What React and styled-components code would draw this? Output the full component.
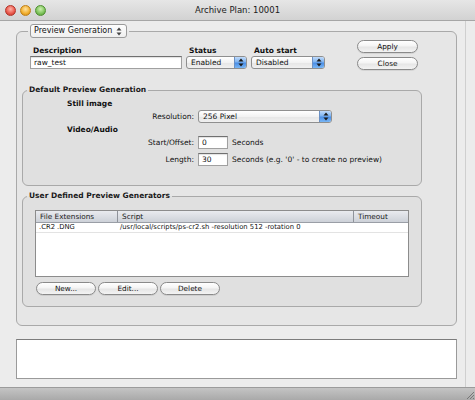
import React from 'react';
import styled, { createGlobalStyle } from 'styled-components';

const Global = createGlobalStyle`
  html, body { margin: 0; padding: 0; background: #ececec; }
  body { font-family: "DejaVu Sans", Verdana, sans-serif; font-size: 7.5px; color: #111; }
  * { box-sizing: border-box; }
`;

const Window = styled.div`
  width: 475px; height: 400px; display: flex; flex-direction: column;
  background: #ececec; overflow: hidden;
`;

const TitleBar = styled.div`
  height: 21px; flex: none; display: grid; grid-template-columns: 1fr auto 1fr; align-items: center;
  background: linear-gradient(#e6e6e6, #d2d2d2); border-bottom: 1px solid #a6a6a6;
`;

const Lights = styled.div`
  display: flex; gap: 4px; padding-left: 5px;
`;

const Light = styled.span`
  width: 11px; height: 11px; border-radius: 50%;
  background: radial-gradient(circle at 50% 35%, ${p => p.$hi} 0%, ${p => p.$c} 60%, ${p => p.$lo} 100%);
  border: 1px solid ${p => p.$lo};
`;

const Title = styled.div`
  font-size: 8.5px; color: #1a1a1a;
`;

const Content = styled.div`
  flex: 1; display: flex; flex-direction: column; padding: 3px 18px 0 16px;
  background: linear-gradient(to right, transparent 465px, #cfcfcf 465px, #cfcfcf 466px, transparent 466px);
`;

const Group = styled.fieldset`
  margin: ${p => p.$m || 0}; min-width: 0;
  border: 1px solid #a9a9a9; border-radius: 6px;
  background: rgba(0, 0, 0, 0.022);
  padding: ${p => p.$pad};
`;

const Legend = styled.legend`
  padding: 0 2px; margin-left: ${p => p.$offset}px;
  font-weight: bold; line-height: 10px; font-size: 7.5px; color: #1a1a1a;
`;

const TopRow = styled.div`
  display: flex; justify-content: space-between; align-items: flex-start; padding: 0 4px 0 8px;
`;

const FieldsGrid = styled.div`
  display: grid; grid-template-columns: 152px 61px 74px; grid-template-rows: 11px 13px;
  column-gap: 4px; margin-top: 5px;
`;

const Label = styled.div`
  font-weight: bold; padding-left: 3px; line-height: 11px; color: #111;
`;

const ButtonCol = styled.div`
  display: flex; flex-direction: column; gap: 4px; width: 61px;
`;

const PushButton = styled.div`
  height: 13px; width: ${p => p.$w || 61}px; border-radius: 7px; border: 1px solid #8a8a8a;
  background: linear-gradient(#ffffff, #f4f4f4 45%, #e6e6e6 55%, #f3f3f3);
  display: flex; align-items: center; justify-content: center; font-size: 7.3px; color: #111;
  box-shadow: 0 1px 0 rgba(0,0,0,0.08);
`;

const TextField = styled.div`
  height: 13px; width: ${p => (p.$w ? p.$w + 'px' : 'auto')}; background: #fff;
  border: 1px solid #a0a0a0; border-top-color: #707070;
  padding-left: 3px; line-height: 11px; font-size: 7.5px;
  box-shadow: inset 0 1px 1px rgba(0,0,0,0.12);
`;

const PopupBox = styled.div`
  height: 13px; width: ${p => p.$w}px; display: flex; align-items: stretch;
  border: 1px solid #8f8f8f; border-radius: 3px; overflow: hidden;
  background: linear-gradient(#ffffff, #f2f2f2 50%, #e5e5e5 51%, #f0f0f0);
`;

const PopupText = styled.div`
  flex: 1; padding-left: 4px; line-height: 11px; font-size: 7.5px; white-space: nowrap;
`;

const PopupCap = styled.div`
  width: 12px; flex: none; display: flex; align-items: center; justify-content: center;
  background: linear-gradient(#c0dbfb, #7fb3ef 45%, #4a8ee6 55%, #7ab7f5);
  border-left: 1px solid #6a90c4;
`;

const LegendPopup = styled.div`
  height: 14px; width: 97px; display: flex; align-items: center; justify-content: space-between;
  border: 1px solid #9a9a9a; border-radius: 3px; padding: 0 4px 0 3px;
  background: linear-gradient(#fdfdfd, #efefef);
  font-size: 8px; font-weight: normal; color: #111; line-height: 12px;
`;

const Heading = styled.div`
  font-weight: bold; line-height: 10px; margin-top: ${p => p.$mt || 0}px;
`;

const FormRow = styled.div`
  display: grid; grid-template-columns: 127px auto; column-gap: 4px; align-items: center;
  height: 13px; margin-top: ${p => p.$mt || 0}px;
`;

const RowLabel = styled.div`
  text-align: right; font-size: 7.5px;
`;

const Inline = styled.div`
  display: flex; align-items: center; gap: 4px; white-space: nowrap;
`;

const Table = styled.div`
  height: 67px; background: #fff; border: 1px solid #8c8c8c;
  display: flex; flex-direction: column;
`;

const TableHeader = styled.div`
  display: grid; grid-template-columns: 81px 236px 1fr; height: 12px; flex: none;
  background: linear-gradient(#e9ebef, #cdd1d8); border-bottom: 1px solid #9a9ea6;
`;

const HeadCell = styled.div`
  padding-left: 4px; line-height: 11px; font-size: 7.3px; color: #1a1a1a;
  border-left: ${p => (p.$first ? 'none' : '1px solid #8f939a')};
`;

const TableRow = styled.div`
  display: grid; grid-template-columns: 81px 236px 1fr; height: 10px;
  border-bottom: 1px solid #e3e3e3;
`;

const Cell = styled.div`
  padding-left: 3px; line-height: 9px; font-size: 6.8px; white-space: nowrap; overflow: hidden;
`;

const ButtonRow = styled.div`
  display: flex; gap: 2px; margin-top: 5px; padding-left: 1px;
`;

const LogBox = styled.div`
  height: 40px; margin-top: 13px; background: #fff;
  border: 1px solid #9a9a9a; border-top-color: #7c7c7c;
`;

const BottomBar = styled.div`
  margin-top: auto; height: 13px; flex: none; display: flex; justify-content: flex-end; align-items: flex-end;
  background: linear-gradient(#c4c4c4, #a9a9a9); border-top: 1px solid #9b9b9b;
  margin-left: -16px; margin-right: -18px;
`;

const Arrows = ({ color = '#1a1a1a' }) => (
  <svg width="6" height="9" viewBox="0 0 6 9">
    <path d="M3 0.5 L5.5 3.5 L0.5 3.5 Z" fill={color} />
    <path d="M3 8.5 L5.5 5.5 L0.5 5.5 Z" fill={color} />
  </svg>
);

const Popup = ({ w, children }) => (
  <PopupBox $w={w}>
    <PopupText>{children}</PopupText>
    <PopupCap><Arrows /></PopupCap>
  </PopupBox>
);

export default function App() {
  return (
    <>
      <Global />
      <Window>
        <TitleBar>
          <Lights>
            <Light $c="#e9564a" $hi="#ffb3a8" $lo="#b23328" />
            <Light $c="#f1ae2c" $hi="#ffe2a0" $lo="#c07f16" />
            <Light $c="#7cc25a" $hi="#cdf0b0" $lo="#4f8f31" />
          </Lights>
          <Title>Archive Plan: 10001</Title>
          <div />
        </TitleBar>
        <Content>
          <Group $pad="2px 34px 18px 5px">
            <Legend $offset={6}>
              <LegendPopup>
                <span>Preview Generation</span>
                <Arrows color="#444" />
              </LegendPopup>
            </Legend>
            <TopRow>
              <FieldsGrid>
                <Label>Description</Label>
                <Label>Status</Label>
                <Label>Auto start</Label>
                <TextField>raw_test</TextField>
                <Popup w={61}>Enabled</Popup>
                <Popup w={74}>Disabled</Popup>
              </FieldsGrid>
              <ButtonCol>
                <PushButton>Apply</PushButton>
                <PushButton>Close</PushButton>
              </ButtonCol>
            </TopRow>

            <Group $m="15px 0 0 0" $pad="4px 0 19px 44px">
              <Legend $offset={-40}>Default Preview Generation</Legend>
              <Heading>Still image</Heading>
              <FormRow $mt={1}>
                <RowLabel>Resolution:</RowLabel>
                <Popup w={134}>256 Pixel</Popup>
              </FormRow>
              <Heading $mt={2}>Video/Audio</Heading>
              <FormRow $mt={1}>
                <RowLabel>Start/Offset:</RowLabel>
                <Inline>
                  <TextField $w={30}>0</TextField>
                  <span>Seconds</span>
                </Inline>
              </FormRow>
              <FormRow $mt={4}>
                <RowLabel>Length:</RowLabel>
                <Inline>
                  <TextField $w={30}>30</TextField>
                  <span>Seconds (e.g. '0' - to create no preview)</span>
                </Inline>
              </FormRow>
            </Group>

            <Group $m="5px 0 0 0" $pad="9px 12px 11px 12px">
              <Legend $offset={-8}>User Defined Preview Generators</Legend>
              <Table>
                <TableHeader>
                  <HeadCell $first>File Extensions</HeadCell>
                  <HeadCell>Script</HeadCell>
                  <HeadCell>Timeout</HeadCell>
                </TableHeader>
                <TableRow>
                  <Cell>.CR2 .DNG</Cell>
                  <Cell>/usr/local/scripts/ps-cr2.sh -resolution 512 -rotation 0</Cell>
                  <Cell />
                </TableRow>
              </Table>
              <ButtonRow>
                <PushButton $w={60}>New...</PushButton>
                <PushButton $w={60}>Edit...</PushButton>
                <PushButton $w={60}>Delete</PushButton>
              </ButtonRow>
            </Group>
          </Group>
          <LogBox />
          <BottomBar>
            <svg width="10" height="10" viewBox="0 0 10 10">
              <path d="M9 2 L2 9 M9 5 L5 9 M9 8 L8 9" stroke="#777" strokeWidth="1" />
            </svg>
          </BottomBar>
        </Content>
      </Window>
    </>
  );
}
